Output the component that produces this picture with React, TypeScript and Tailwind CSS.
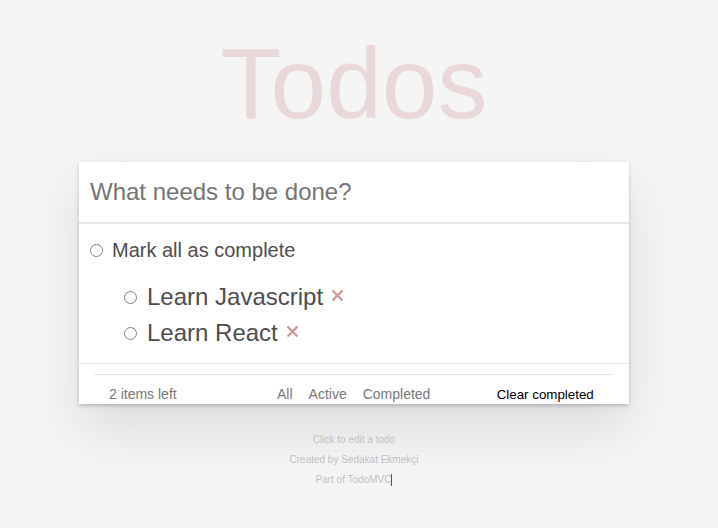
const todos = ['Learn Javascript', 'Learn React'];

function Radio() {
  return <span className="inline-block w-[13px] h-[13px] rounded-full border border-[#808080] bg-white shrink-0"></span>;
}

function Cross() {
  return (
    <svg width="13" height="13" viewBox="0 0 13 13" className="shrink-0">
      <path d="M1.5 1.5l10 10M11.5 1.5l-10 10" stroke="#cc9a9a" strokeWidth={2.3} strokeLinecap="butt" />
    </svg>
  );
}

export default function App() {
  return (
    <div className="min-h-screen bg-[#f5f5f5] font-['Liberation_Sans',Arial,sans-serif]">
      <div className="w-[708px] flex flex-col items-center">
        {/* Title */}
        <h1 className="mt-[26px] text-[100px] leading-[115px] font-normal text-[rgba(175,47,47,0.15)]">Todos</h1>

        {/* Card */}
        <div className="mt-[21px] w-[550px] bg-white shadow-[0_2px_4px_0_rgba(0,0,0,0.2),0_25px_50px_0_rgba(0,0,0,0.1)]">
          <div className="h-[62px] flex items-center pl-[11px] border-b-2 border-[#e6e6e6] text-[24px] text-[#757575]">
            What needs to be done?
          </div>

          <div className="h-[52px] flex items-center pl-[11px] gap-[9px] text-[20px] text-[#4d4d4d]">
            <Radio />
            <span>Mark all as complete</span>
          </div>

          <ul className="mt-[3px] mb-[12px] pl-[45px]">
            {todos.map((t) => (
              <li key={t} className="h-[36px] flex items-center text-[24px] text-[#4d4d4d]">
                <Radio />
                <span className="ml-[10px]">{t}</span>
                <span className="ml-[8px] -mt-[4px] flex">
                  <Cross />
                </span>
              </li>
            ))}
          </ul>

          {/* Footer */}
          <div className="border-t border-[#e6e6e6]">
            <div className="mt-[10px] mx-[15px] border-t border-[#e6e6e6]"></div>
            <div className="pt-[9px] h-[29px] flex items-start leading-[20px] text-[14px] text-[#777]">
              <span className="ml-[30px] w-[168px]">2 items left</span>
              <span className="mr-[16px]">All</span>
              <span className="mr-[16px]">Active</span>
              <span className="w-[134px]">Completed</span>
              <span className="text-[13.33px] text-black leading-[21px]">Clear completed</span>
            </div>
          </div>
        </div>

        {/* Info */}
        <div className="mt-[26px] flex flex-col items-center text-[10px] leading-[20px] text-[#bfbfbf]">
          <p>Click to edit a todo</p>
          <p>Created by Sedakat Ekmekçi</p>
          <p className="flex items-center">
            Part of TodoMVC
            <span className="inline-block w-px h-[12px] bg-[#555]"></span>
          </p>
        </div>
      </div>
    </div>
  );
}
